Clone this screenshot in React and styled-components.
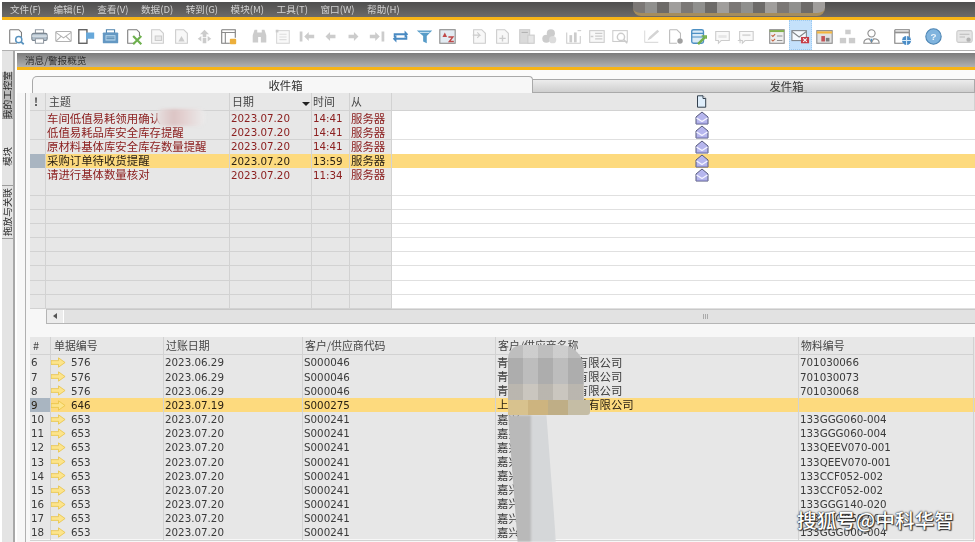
import React from "react";
import styled, { createGlobalStyle } from "styled-components";

const CJK = `"Noto Sans CJK SC", "Liberation Sans", sans-serif`;
const NUM = `"DejaVu Sans", "Noto Sans CJK SC", sans-serif`;

const Global = createGlobalStyle`
  html, body { margin: 0; background: #fff; overflow: hidden; }
  #root { width: 975px; height: 542px; overflow: hidden; position: relative; }
  * { box-sizing: border-box; }
`;

const Page = styled.div`
  width: 975px; height: 542px; overflow: hidden; padding-top: 2px; padding-left: 2px;
  display: flex; flex-direction: column; font-family: ${CJK}; position: relative;
  background: #fff; filter: blur(0.4px);
`;
const MenuBar = styled.div`
  flex: none; height: 18px; display: flex; align-items: center; gap: 12.5px; padding: 1px 0 0 8px;
  background: linear-gradient(#4f4f4f, #6c6a68); border-bottom: 3px solid #f6b417;
`;
const MenuItem = styled.span`
  font-size: 9.6px; color: #d2d2d2; white-space: nowrap; line-height: 1;
`;
const Toolbar = styled.div`
  flex: none; height: 31px; display: flex; align-items: stretch; padding: 0 0 0 2.5px;
  border-bottom: 1px solid #b0b0b0; background: #fff;
`;
const ToolGroup = styled.div`
  display: flex; margin-right: 7.7px;
`;
const ToolButton = styled.div`
  width: 23.55px; height: 30px; padding-top: 2px; display: flex; align-items: center; justify-content: center;
  background: ${p => (p.$active ? "#c4e1fb" : "transparent")};
  ${p => p.$active && "outline: 1px dotted #9ccaf2; outline-offset: -1px;"}
`;
const Main = styled.div`
  flex: 1; min-height: 0; display: flex; background: #fff;
`;
const Rail = styled.div`
  flex: none; width: 13px; background: #e4e4e4; border-right: 2px solid #a8a8a8;
  display: flex; flex-direction: column; padding-top: 21px; margin-right: 2px;
`;
const RailTab = styled.div`
  height: ${p => p.$h}px; width: 11px; display: flex; align-items: center; justify-content: center;
  padding-bottom: ${p => p.$shift || 0}px;
  background: ${p => (p.$active ? "#bcbcbc" : "#e4e4e4")};
  border-top: 1px solid #9d9d9d;
  writing-mode: vertical-rl; text-orientation: sideways; transform: rotate(180deg);
  font-size: 9.6px; color: #2a2a2a; white-space: nowrap; line-height: 11px;
`;
const Workspace = styled.div`
  flex: 1; min-width: 0; margin-top: 2px; display: flex; flex-direction: column; background: #f7f7f7;
`;
const TitleBar = styled.div`
  flex: none; height: 17px; padding: 0 0 0 8px; display: flex; align-items: center;
  background: linear-gradient(#7c7c7c, #b0b0b0); border-bottom: 3px solid #f6b417;
  font-size: 9.6px; color: #2e2e2e;
`;
const Tabs = styled.div`
  flex: none; height: 23px; padding: 6px 0 0 15px; display: flex; align-items: flex-end; background: #fbfbfb;
`;
const Tab = styled.div`
  height: ${p => (p.$active ? 17 : 14)}px; width: ${p => p.$w}px;
  display: flex; align-items: center; justify-content: center; font-size: 11.4px; color: #333;
  border: 1px solid #a9a9a9; border-bottom: ${p => (p.$active ? "none" : "1px solid #a9a9a9")};
  border-radius: ${p => (p.$active ? "5px 4px 0 0" : "0")};
  padding-left: ${p => p.$shift || 0}px;
  background: ${p => (p.$active ? "#f7f7f7" : "linear-gradient(#ececec, #cfcfcf)")};
  ${p => !p.$active && "border-left: none; flex: 1;"}
`;
const Panel = styled.div`
  flex: 1; min-height: 0; margin-left: 8px; padding-left: 4px; border-left: 1px solid #b0b0b0;
  display: flex; flex-direction: column;
`;
const Row = styled.div`
  flex: none; display: grid; height: ${p => p.$h || 14.1}px;
  grid-template-columns: ${p => p.$cols};
  background: ${p => (p.$sel ? "#fdda7e" : "#e7e7e7")};
  color: ${p => (p.$sel ? "#2a2114" : p.$text || "#3a3a3a")};
`;
const Cell = styled.div`
  display: flex; align-items: center; white-space: nowrap; line-height: 1; min-width: 0;
  padding-left: ${p => (p.$pl === undefined ? 1 : p.$pl)}px;
  border-right: 1px solid #d2d2d2; border-bottom: 1px solid #d2d2d2;
  font-family: ${p => (p.$num ? NUM : CJK)};
  font-size: ${p => (p.$num ? "10.3px" : "11.4px")};
  ${p => p.$marker && "background: #a9b5c1;"}
  ${p => p.$blank && `background: ${p.$sel ? "#fdda7e" : "#fff"}; border-right: none; border-bottom-color: #e0e0e0;`}
`;
const HeadCell = styled(Cell)`
  font-size: 10.9px; color: #454545; position: relative; font-weight: ${p => (p.$bold ? 700 : 400)};
`;
const SortMark = styled.i`
  position: absolute; right: 1px; top: 9px; width: 0; height: 0;
  border-left: 4px solid transparent; border-right: 4px solid transparent; border-top: 4px solid #222;
`;
const Scrollbar = styled.div`
  flex: none; height: 15px; margin-left: 16px; display: flex; background: #e2e2e2;
  border-left: 1px solid #b5b5b5; border-bottom: 1px solid #b5b5b5; border-top: 1px solid #c8c8c8;
`;
const ScrollButton = styled.div`
  width: 17px; border-right: 1px solid #fff; display: flex; align-items: center; justify-content: center;
  background: #ececec;
  &::before { content: ""; border-right: 4px solid #555; border-top: 3px solid transparent; border-bottom: 3px solid transparent; }
`;
const ScrollTrack = styled.div`
  flex: 1; display: flex; align-items: center; padding-left: 639px;
  &::before { content: ""; width: 6px; height: 5px; background: repeating-linear-gradient(90deg, #aaa 0 1px, transparent 1px 2px); }
`;
const Splitter = styled.div`
  flex: none; height: 13.4px; background: #f7f7f7;
`;
const RightFill = styled.div`
  height: 100%;
`;
const DocNo = styled.span`
  display: inline-flex; align-items: center; gap: 5px; font-family: ${NUM}; font-size: 10.3px;
`;

/* Mosaic smudges lying over the picture's censored text */
const TitleSmudge = styled.div`
  position: absolute; left: 633px; top: 2px; width: 192px; height: 14px; border-radius: 0 0 8px 8px;
  background: repeating-linear-gradient(90deg, #7b7876 0 12px, #90908e 12px 24px, #6d6b69 24px 36px, #a09e9c 36px 48px);
  border-bottom: 3px solid #a58d5e;
`;
const RowSmudge = styled.div`
  position: absolute; left: 157px; top: 109px; width: 48px; height: 17px; border-radius: 6px; filter: blur(1.5px);
  background: linear-gradient(90deg, #e6dfdf 0%, #dcc4c4 35%, #e3d0d0 55%, #ebebeb 100%);
`;
const NameSmudgeTop = styled.div`
  position: absolute; left: 508px; top: 345px; width: 76px; height: 55px; border-radius: 14px 24px 0 0;
  background:
    repeating-linear-gradient(90deg, rgba(0,0,0,.05) 0 15px, rgba(255,255,255,.1) 15px 30px),
    linear-gradient(180deg, #c8c8c8 0 24%, #b6b6b6 24% 70%, #c4c0b8 70%);
`;
const NameSmudgeBand = styled.div`
  position: absolute; left: 508px; top: 400px; width: 82px; height: 15px; border-radius: 0 0 3px 0;
  background: repeating-linear-gradient(90deg, #d8c28e 0 20px, #cdb47f 20px 40px, #bfae86 40px 60px, #c5bda5 60px 82px);
`;
const NameSmudgeBottom = styled.div`
  position: absolute; left: 508px; top: 415px; width: 48px; height: 127px; filter: blur(0.8px);
  clip-path: polygon(0 0, 80% 0, 100% 100%, 20% 100%);
  background: linear-gradient(90deg, #b9b9b9 0 48%, #d5d7d9 48% 100%);
`;
const Watermark = styled.div`
  position: absolute; left: 797px; top: 507px; color: #fff; font-family: ${CJK}; font-size: 19.7px; font-weight: 500;
  line-height: 26px; white-space: nowrap; text-shadow: 0 0 2px #222, 0 0 1px #222, 1px 1px 1px #333;
`;

const IconSvg = styled.svg`
  width: ${p => p.$s || 19}px; height: ${p => p.$s || 19}px; flex: none; display: block;
  opacity: ${p => p.$o || 1};
`;
const MiniArrow = () => (
  <IconSvg $s={15} viewBox="0 0 16 12">
    <path d="M0 4h8V1l7 5-7 5V8H0z" fill="#fce48c" stroke="#e8c23f" strokeWidth=".8" />
  </IconSvg>
);
const OpenMail = () => (
  <IconSvg $s={14} viewBox="0 0 14 14">
    <path d="M1 6l6-5 6 5v7H1z" fill="#b6b6ee" stroke="#55587a" />
    <path d="M1.5 7L7 10.5 12.5 7" fill="none" stroke="#f4f4ff" strokeWidth="1.4" />
    <path d="M1.5 12.5h11" stroke="#8e8ec8" strokeWidth="1.2" />
  </IconSvg>
);
const DocMini = () => (
  <IconSvg $s={13} viewBox="0 0 13 13">
    <path d="M2.5 .8h5.5l2.7 2.7v8.7h-8.2z" fill="#dfeefb" stroke="#33404e" />
    <path d="M8 .8v2.7h2.7" fill="#fff" stroke="#33404e" />
  </IconSvg>
);

const G = "#c4c4c4";
const I = ({ children }) => <IconSvg $o={0.85} viewBox="0 0 21 21" fill="none" strokeWidth="1.2">{children}</IconSvg>;
const grayDoc = <path d="M4 3h9l4 4v11H4z" stroke={G} fill="#f7f7f7" />;

const icons = [
  [
    <I><path d="M3 3h10l3 3v5M3 3v15h8" stroke="#666" /><circle cx="13" cy="14" r="3.4" stroke="#3b7fb3" strokeWidth="1.6" /><path d="M15.5 16.5l3 2.5" stroke="#3b7fb3" strokeWidth="2" /></I>,
    <I><path d="M6 3h9v4H6z" stroke="#7d8791" /><rect x="2" y="7" width="17" height="8" rx="2" fill="#a3b4c2" stroke="#65727e" /><path d="M2 10h17" stroke="#e4ebf0" /><path d="M6 13h9v5H6z" fill="#fff" stroke="#7d8791" /></I>,
    <I><rect x="2" y="5" width="17" height="11" rx="1" stroke="#a5a5a5" /><path d="M2 6l8.5 6L19 6M2 16l6-6M19 16l-6-6" stroke="#a5a5a5" /></I>,
    <I><rect x="2" y="3" width="9" height="15" fill="#fff" stroke="#444" strokeWidth="1.5" /><path d="M10 6h9v7h-7l-2 2z" fill="#4d9ad4" /></I>,
    <I><path d="M6 3h9v4H6z" stroke="#2f6d9f" /><rect x="2" y="6" width="17" height="12" rx="1" fill="#4a87b9" /><path d="M5 9h11v6H5z" fill="#a9cfe9" /><path d="M6 11h9M6 13h9" stroke="#2f6d9f" /></I>,
    <I><path d="M3 3h10l3 3v4M3 3v15h7" stroke="#666" /><path d="M9 10l9 9M18 10l-9 9" stroke="#55a330" strokeWidth="2.4" /></I>,
    <I>{grayDoc}<path d="M8 10h7v5H8z" fill="#e4e4e4" stroke={G} /></I>,
    <I>{grayDoc}<path d="M7 16l3.5-6 3.5 6z" fill={G} /></I>,
    <I><path d="M10.5 3l-5 5h3v3h4V8h3zM3 13l4-3v6zM18 13l-4-3v6zM8.5 12h4v6h-4z" fill={G} /></I>,
    <I><path d="M3 3h15v9M3 3v15h9" stroke="#666" /><path d="M3 6h15M7 6v12" stroke="#777" /><rect x="12" y="13" width="7" height="6" rx="1" fill="#e9a21a" /></I>,
  ],
  [
    <I><path d="M3 9l2-6h3v3h5V3h3l2 6v8h-6V11H9v6H3z" fill={G} /></I>,
    <I><rect x="4" y="4" width="14" height="14" stroke="#d0d0d0" fill="#f9f9f9" /><path d="M7 8h8M7 11h8M7 14h8" stroke="#d8d8d8" /><path d="M3 3h3v3H3z" fill={G} /></I>,
    <I><path d="M3 5h3v11H3zM8 10.5l5-5v3h6v4h-6v3z" fill={G} /></I>,
    <I><path d="M5 10.5l5-5v3h6v4h-6v3z" fill={G} /></I>,
    <I><path d="M16 10.5l-5-5v3H5v4h6v3z" fill={G} /></I>,
    <I><path d="M18 5h-3v11h3zM13 10.5l-5-5v3H2v4h6v3z" fill={G} /></I>,
    <I><path d="M3 11V7h12V4l4 4-4 4V9H5v2zM18 10v4H6v3l-4-4 4-4v3h10v-2z" fill="#2a76b8" /></I>,
    <I><path d="M2 4h17l-6 6v8l-4-2v-6z" fill="#3a8bbf" /><path d="M5 6h11" stroke="#bcdcf0" /></I>,
    <I><rect x="2" y="3" width="17" height="15" fill="#dfe8f0" stroke="#777" /><path d="M5 11l2.5-5 2.5 5z" fill="#b52a2a" /><path d="M11.5 11h5l-4 5h5" stroke="#b52a2a" strokeWidth="1.5" /></I>,
  ],
  [
    <I>{grayDoc}<path d="M3 9h8l-3-3M11 9l-3 3" stroke={G} fill="none" /></I>,
    <I>{grayDoc}<path d="M10.5 9v7M7 12.5h7" stroke={G} strokeWidth="1.5" /></I>,
    <I><rect x="3" y="3" width="11" height="15" fill="#d4d4d4" stroke={G} /><rect x="12" y="9" width="7" height="9" fill="#e2e2e2" stroke={G} /><path d="M5 6h7" stroke="#a5a5a5" /></I>,
    <I><circle cx="12" cy="7" r="4.5" fill={G} /><circle cx="7" cy="13" r="4.5" fill={G} /><circle cx="14" cy="14" r="4" fill="#d6d6d6" /></I>,
    <I><path d="M3 6v12h15V10" stroke={G} /><rect x="6" y="9" width="3" height="8" fill={G} /><rect x="11" y="6" width="3" height="11" fill={G} /><path d="M15 4h4" stroke={G} /></I>,
    <I><rect x="3" y="4" width="16" height="13" stroke={G} fill="#f7f7f7" /><path d="M9 7h8M9 10h8M9 13h8M4 10.5h3" stroke={G} strokeWidth="1.4" /></I>,
    <I><rect x="2" y="4" width="16" height="12" stroke={G} /><circle cx="11" cy="11" r="4" stroke={G} strokeWidth="1.6" /><path d="M14 14l4 4" stroke={G} strokeWidth="1.8" /></I>,
  ],
  [
    <I><path d="M3 17V4M3 17h15" stroke="#d6d6d6" /><path d="M6 15l2-4 9-8 2 2-9 8z" fill="#cdcdcd" /></I>,
    <I><path d="M4 3h8l4 4v6M4 3v15h8" stroke="#b0b0b0" /><circle cx="15.5" cy="15.5" r="3" fill="#909090" /></I>,
    <I><rect x="3" y="3" width="13" height="15" rx="2" fill="#d5e8f6" stroke="#2f7dba" strokeWidth="1.5" /><path d="M3 7h13M3 11h13" stroke="#2f7dba" /><path d="M9 18l8-8 2 2-8 8z" fill="#5ea22c" /><path d="M14 10h5v3" stroke="#5ea22c" strokeWidth="1.8" /></I>,
    <I><path d="M3 5h15v10H9l-3 3v-3H3z" stroke={G} fill="#f8f8f8" /><path d="M6 9h9v3H6z" fill="#e2e2e2" /></I>,
    <I><path d="M4 5h15v10H10l-3 3v-3H4z" stroke={G} fill="#f8f8f8" /><path d="M2 15h5M4.5 13v5" stroke={G} /><path d="M7 9h9" stroke="#d2d2d2" strokeWidth="2" /></I>,
  ],
  [
    <I><rect x="3" y="3" width="16" height="15" fill="#ececec" stroke="#777" /><path d="M3 4.5h16" stroke="#6aa32c" strokeWidth="2.2" /><path d="M5 9l1.5 1.5L9 8M5 14l1.5 1.5L9 13" stroke="#b8471c" /><path d="M11 10h6M11 15h6" stroke="#808080" /></I>,
    <I><rect x="1" y="4" width="16" height="11" fill="#fff" stroke="#777" /><path d="M1 5l8 6 8-6" stroke="#777" /><rect x="11" y="11" width="9" height="7" fill="#c81f26" /><path d="M13.5 12.5l4 4M17.5 12.5l-4 4" stroke="#fff" /></I>,
    <I><rect x="2" y="4" width="17" height="14" fill="#dedede" stroke="#777" /><path d="M2 6h17" stroke="#f0a91d" strokeWidth="2.4" /><rect x="7" y="10" width="4" height="6" fill="#b9363a" /><rect x="12" y="12" width="4" height="4" fill="#666" /></I>,
    <I><rect x="8" y="3" width="6" height="5" fill={G} /><rect x="2" y="12" width="7" height="6" fill={G} /><rect x="12" y="12" width="7" height="6" fill={G} /></I>,
    <I><circle cx="10.5" cy="7" r="4" stroke="#777" /><path d="M2 18c0-4 3-5 6-5l2.5 4 2.5-4c3 0 6 1 6 5z" stroke="#777" fill="#fff" /><path d="M9.3 13h2.4l-1.2 4z" fill="#2f7dba" /></I>,
  ],
  [
    <I><path d="M2 3h16v8M2 3v15h9" stroke="#666" /><path d="M2 6h16" stroke="#808080" strokeWidth="2" /><circle cx="15" cy="15" r="5" fill="#2b78bd" /><path d="M10 15h10M15 10v10" stroke="#d5eaf9" /></I>,
  ],
  [
    <I><circle cx="10.5" cy="10.5" r="8.5" fill="#6aa8d9" stroke="#2d6fa6" /><text x="10.5" y="14.5" textAnchor="middle" fontSize="11" fontFamily="Liberation Sans, sans-serif" fontWeight="700" fill="#e8f3fb">?</text></I>,
  ],
  [
    <I><rect x="2" y="4" width="17" height="13" rx="2" fill="#e2e2e2" stroke={G} /><path d="M5 8h11M5 11h6" stroke="#b0b0b0" /><circle cx="15" cy="14" r="2.4" fill="#a5a5a5" /></I>,
  ],
];

const menus = ["文件(F)", "编辑(E)", "查看(V)", "数据(D)", "转到(G)", "模块(M)", "工具(T)", "窗口(W)", "帮助(H)"];

const UP_COLS = "16px 184px 82px 38px 42px 1fr";
const LOW_COLS = "21px 113px 139px 193px 303px 175px 1fr";

const messages = [
  ["车间低值易耗领用确认", "2023.07.20", "14:41"],
  ["低值易耗品库安全库存提醒", "2023.07.20", "14:41"],
  ["原材料基体库安全库存数量提醒", "2023.07.20", "14:41"],
  ["采购订单待收货提醒", "2023.07.20", "13:59"],
  ["请进行基体数量核对", "2023.07.20", "11:34"],
  ...Array(9).fill(null),
];

const docs = [
  [6, 576, "2023.06.29", "S000046", "青岛某某某某某有限公司", "701030066"],
  [7, 576, "2023.06.29", "S000046", "青岛某某某某某有限公司", "701030073"],
  [8, 576, "2023.06.29", "S000046", "青岛某某某某某有限公司", "701030068"],
  [9, 646, "2023.07.19", "S000275", "上海某某某某某某有限公司", ""],
  [10, 653, "2023.07.20", "S000241", "嘉兴", "133GGG060-004"],
  [11, 653, "2023.07.20", "S000241", "嘉兴", "133GGG060-004"],
  [12, 653, "2023.07.20", "S000241", "嘉兴", "133QEEV070-001"],
  [13, 653, "2023.07.20", "S000241", "嘉兴", "133QEEV070-001"],
  [14, 653, "2023.07.20", "S000241", "嘉兴", "133CCF052-002"],
  [15, 653, "2023.07.20", "S000241", "嘉兴", "133CCF052-002"],
  [16, 653, "2023.07.20", "S000241", "嘉兴", "133GGG140-020"],
  [17, 653, "2023.07.20", "S000241", "嘉兴", "133GGG060-004"],
  [18, 653, "2023.07.20", "S000241", "嘉兴", "133GGG000-004"],
];

export default function App() {
  return (
    <>
      <Global />
      <Page>
        <MenuBar>
          {menus.map(m => <MenuItem key={m}>{m}</MenuItem>)}
        </MenuBar>
        <Toolbar>
          {icons.map((group, g) => (
            <ToolGroup key={g}>
              {group.map((ic, i) => (
                <ToolButton key={i} $active={g === 4 && i === 1}>{ic}</ToolButton>
              ))}
            </ToolGroup>
          ))}
        </Toolbar>
        <Main>
          <Rail>
            <RailTab $h={47} $active>我的工控室</RailTab>
            <RailTab $h={67} $shift={8}>模块</RailTab>
            <RailTab $h={53}>拖放与关联</RailTab>
          </Rail>
          <Workspace>
            <TitleBar>消息/警报概览</TitleBar>
            <Tabs>
              <Tab $active $w={501} $shift={6}>收件箱</Tab>
              <Tab $shift={66}>发件箱</Tab>
            </Tabs>
            <Panel>
              <Row $cols={UP_COLS} $h={18.4}>
                <HeadCell $pl={4} $bold>!</HeadCell>
                <HeadCell $pl={3}>主题</HeadCell>
                <HeadCell $pl={2}>日期<SortMark /></HeadCell>
                <HeadCell>时间</HeadCell>
                <HeadCell>从</HeadCell>
                <HeadCell $pl={303}><DocMini /></HeadCell>
              </Row>
              {messages.map((m, i) => {
                const sel = i === 3;
                return (
                  <Row key={i} $cols={UP_COLS} $sel={sel} $text="#8c2020">
                    <Cell $marker={sel} />
                    <Cell>{m && m[0]}</Cell>
                    <Cell $num>{m && m[1]}</Cell>
                    <Cell $num>{m && m[2]}</Cell>
                    <Cell>{m && "服务器"}</Cell>
                    <Cell $blank $sel={sel} $pl={303}>{m && <OpenMail />}</Cell>
                  </Row>
                );
              })}
              <Scrollbar>
                <ScrollButton />
                <ScrollTrack />
              </Scrollbar>
              <Splitter />
              <Row $cols={LOW_COLS} $h={18}>
                <HeadCell $pl={3}>#</HeadCell>
                <HeadCell $pl={3}>单据编号</HeadCell>
                <HeadCell $pl={2}>过账日期</HeadCell>
                <HeadCell $pl={2}>客户/供应商代码</HeadCell>
                <HeadCell $pl={2}>客户/供应商名称</HeadCell>
                <HeadCell $pl={2}>物料编号</HeadCell>
                <RightFill />
              </Row>
              {docs.map(d => {
                const sel = d[0] === 9;
                return (
                  <Row key={d[0]} $h={14.17} $cols={LOW_COLS} $sel={sel}>
                    <Cell $num $marker={sel}>{d[0]}</Cell>
                    <Cell $pl={0}><DocNo><MiniArrow />{d[1]}</DocNo></Cell>
                    <Cell $num>{d[2]}</Cell>
                    <Cell $num>{d[3]}</Cell>
                    <Cell>{d[4]}</Cell>
                    <Cell $num>{d[5]}</Cell>
                    <RightFill />
                  </Row>
                );
              })}
            </Panel>
          </Workspace>
        </Main>
        <TitleSmudge />
        <RowSmudge />
        <NameSmudgeTop />
        <NameSmudgeBand />
        <NameSmudgeBottom />
      </Page>
      <Watermark>搜狐号@中科华智</Watermark>
    </>
  );
}
